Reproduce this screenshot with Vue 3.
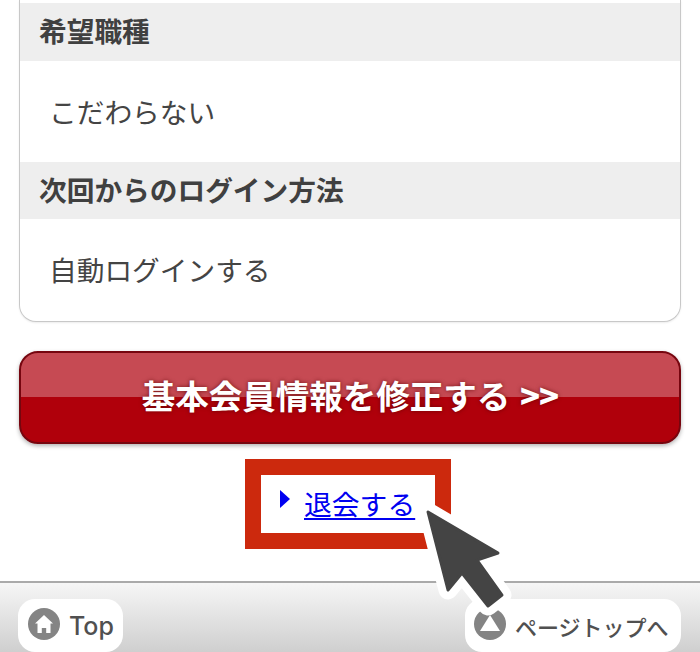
<script setup>
const sections = [
  { title: '希望職種', value: 'こだわらない', cls: 'v1' },
  { title: '次回からのログイン方法', value: '自動ログインする', cls: 'v2' }
]
</script>

<template>
  <div class="page">
    <main class="content">
      <section class="card">
        <template v-for="s in sections" :key="s.title">
          <h2 class="head">{{ s.title }}</h2>
          <p class="val" :class="s.cls">{{ s.value }}</p>
        </template>
      </section>
      <button class="cta" type="button">基本会員情報を修正する <b class="arrows">&gt;&gt;</b></button>
      <div class="leave-wrap">
        <div class="leave">
          <svg class="tri" viewBox="0 0 10 18" width="10" height="18"><path d="M0 0L10 9L0 18Z" fill="#0000f0" /></svg>
          <a class="link" href="#">退会する</a>
        </div>
      </div>
    </main>
    <footer class="foot">
      <a class="pill top">
        <svg class="ico" viewBox="0 0 32 32" width="32" height="32">
          <circle cx="16" cy="16" r="16" fill="#848484" />
          <path d="M16 7L25 15.5L22.5 15.5L22.5 25L18.2 25L18.2 20L13.8 20L13.8 25L9.5 25L9.5 15.5L7 15.5Z" fill="#fff" />
        </svg>
        <span>Top</span>
      </a>
      <a class="pill up">
        <svg class="ico" viewBox="0 0 32 32" width="32" height="32">
          <circle cx="16" cy="16" r="16" fill="#848484" />
          <path d="M16 7L26 23L6 23Z" fill="#fff" />
        </svg>
        <span>ページトップへ</span>
      </a>
    </footer>
    <svg class="cursor" viewBox="0 0 700 652" width="700" height="652">
      <path class="halo" d="M428 512L498 553L477 560L502 595L488 606L462 573L448 590Z" />
      <path class="arrow" d="M428 512L498 553L477 560L502 595L488 606L462 573L448 590Z" />
    </svg>
  </div>
</template>

<style>
html, body { margin: 0; background: #fff; }
</style>

<style scoped>
.page {
  position: relative;
  width: 700px;
  height: 652px;
  overflow: hidden;
  display: flex;
  flex-direction: column;
  background: #fff;
  font-family: "Noto Sans CJK JP", "Noto Sans", sans-serif;
  color: #3f3f3f;
}
.content { flex: 1; padding: 0 19px; }
.card {
  box-sizing: border-box;
  height: 322px;
  padding-top: 3px;
  background: #fff;
  border: 1.5px solid #c8c8c8;
  border-top: 0;
  border-radius: 0 0 17px 17px;
  box-shadow: 0 1px 2px rgba(0,0,0,.08);
}
.head {
  margin: 0;
  height: 58px;
  padding: 0 0 3px 19px;
  box-sizing: border-box;
  background: #eeeeee;
  font-size: 27.7px;
  font-weight: 700;
  line-height: 55px;
  color: #404040;
}
.card .head:nth-of-type(2) { height: 57px; line-height: 54px; }
.val {
  margin: 0;
  height: 101px;
  padding-left: 29px;
  font-size: 27.7px;
  font-weight: 400;
  line-height: 101px;
  color: #444;
}
.cta {
  display: block;
  box-sizing: border-box;
  width: 662px;
  height: 93px;
  margin: 29px 0 0;
  padding: 0 0 6px;
  border: 2px solid #76060f;
  border-radius: 19px;
  background: linear-gradient(to bottom, #c64a53 0, #c64a53 49.5%, #b0000b 49.5%, #b0000b 100%);
  box-shadow: 0 2px 4px rgba(0,0,0,.3);
  color: #fff;
  font-family: inherit;
  font-size: 33.5px;
  font-weight: 700;
  line-height: 1;
  text-shadow: 0 0 4px rgba(90,0,0,.75);
}
.arrows { font-size: 33px; font-weight: 900; margin-left: 2px; letter-spacing: -1px; }
.leave-wrap { display: flex; justify-content: center; margin-top: 15px; margin-left: -4px; }
.leave {
  box-sizing: border-box;
  width: 206px;
  height: 90px;
  border: 16px solid #cc290d;
  background: #fff;
  display: flex;
  align-items: flex-start;
  padding: 15px 0 0 19px;
  gap: 14px;
}
.tri { flex: none; }
.link {
  margin-top: -2px;
  color: #0000f0;
  font-size: 27.8px;
  line-height: 30px;
  text-decoration: underline;
  text-underline-offset: 3px;
  text-decoration-thickness: 1.5px;
}
.foot {
  box-sizing: border-box;
  height: 71px;
  border-top: 2px solid #aaa;
  background: linear-gradient(to bottom, #f6f6f6, #cfcfcf);
  display: flex;
  justify-content: space-between;
  align-items: flex-end;
  padding: 0 19px 0 18px;
}
.pill {
  box-sizing: border-box;
  height: 53px;
  background: #fff;
  border-radius: 17px;
  display: flex;
  align-items: center;
  gap: 10px;
  padding-left: 10px;
  font-size: 26px;
  color: #505050;
  font-weight: 500;
}
.ico { margin-top: -4px; flex: none; }
.top { width: 105px; font-family: "Inter", "Noto Sans", sans-serif; font-weight: 500; font-size: 25px; gap: 9px; }
.up { width: 216px; font-size: 22px; padding-left: 9px; gap: 9px; white-space: nowrap; }
.cursor { position: absolute; left: 0; top: 0; pointer-events: none; }
.halo { fill: #fff; stroke: #fff; stroke-width: 19; stroke-linejoin: round; }
.arrow { fill: #444; stroke: #444; stroke-width: 3; stroke-linejoin: round; }
</style>
